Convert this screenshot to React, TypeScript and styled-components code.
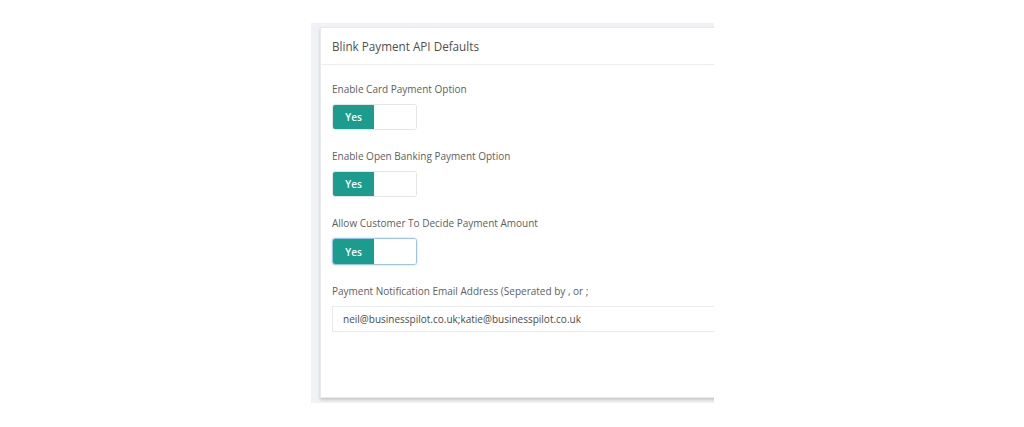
import React from 'react';
import styled, { createGlobalStyle } from 'styled-components';

const GlobalStyle = createGlobalStyle`
  html, body {
    margin: 0;
    padding: 0;
    background: #ffffff;
    font-family: "Open Sans", "Liberation Sans", sans-serif;
  }
`;

const Page = styled.div`
  width: 1024px;
  height: 427px;
  padding: 23px 0 0 311px;
  box-sizing: border-box;
`;

const Frame = styled.div`
  width: 403px;
  height: 380px;
  background: #f1f2f5;
  overflow: hidden;
  padding: 4px 0 0 9px;
  box-sizing: border-box;
`;

const Card = styled.section`
  width: 520px;
  height: 371px;
  background: #ffffff;
  border: 1px solid #e8e9ec;
  box-sizing: border-box;
  box-shadow: 0 2px 3px rgba(0, 0, 0, 0.18);
`;

const CardHeader = styled.header`
  height: 36px;
  display: flex;
  align-items: center;
  padding-left: 11px;
  border-bottom: 1px solid #ebedf0;
  font-size: 11.7px;
  color: #505050;
`;

const CardBody = styled.div`
  padding: 17px 11px 0;
  display: flex;
  flex-direction: column;
`;

const Field = styled.div`
  display: flex;
  flex-direction: column;
  gap: 8px;
  margin-bottom: 19px;
`;

const Label = styled.label`
  font-size: 10px;
  color: #5e5e5e;
  line-height: 14px;
`;

const Toggle = styled.div<{ $focused?: boolean }>`
  width: 85px;
  height: ${(p) => (p.$focused ? 27 : 26)}px;
  display: flex;
  box-sizing: border-box;
  border: 1px solid ${(p) => (p.$focused ? '#9cc3ea' : '#e3e5e8')};
  border-radius: 3px;
  overflow: hidden;
  box-shadow: ${(p) => (p.$focused ? '0 0 2px rgba(90, 150, 220, 0.5)' : 'none')};
`;

const ToggleOn = styled.span`
  width: 41px;
  background: #1b9c8c;
  color: #ffffff;
  font-size: 10px;
  font-weight: 600;
  display: flex;
  align-items: center;
  justify-content: center;
`;

const ToggleOff = styled.span`
  flex: 1;
  background: #ffffff;
`;

const Input = styled.div`
  height: 26px;
  box-sizing: border-box;
  border: 1px solid #e8eaed;
  display: flex;
  align-items: center;
  padding-left: 10px;
  font-size: 10px;
  color: #4a4a4a;
`;

const toggles = [
  { label: 'Enable Card Payment Option', focused: false },
  { label: 'Enable Open Banking Payment Option', focused: false },
  { label: 'Allow Customer To Decide Payment Amount', focused: true },
];

const App: React.FC = () => {
  return (
    <>
      <GlobalStyle />
      <Page>
        <Frame>
          <Card>
            <CardHeader>Blink Payment API Defaults</CardHeader>
            <CardBody>
              {toggles.map((t) => (
                <Field key={t.label}>
                  <Label>{t.label}</Label>
                  <Toggle $focused={t.focused}>
                    <ToggleOn>Yes</ToggleOn>
                    <ToggleOff />
                  </Toggle>
                </Field>
              ))}
              <Field>
                <Label>Payment Notification Email Address (Seperated by , or ;</Label>
                <Input>neil@businesspilot.co.uk;katie@businesspilot.co.uk</Input>
              </Field>
            </CardBody>
          </Card>
        </Frame>
      </Page>
    </>
  );
};

export default App;
